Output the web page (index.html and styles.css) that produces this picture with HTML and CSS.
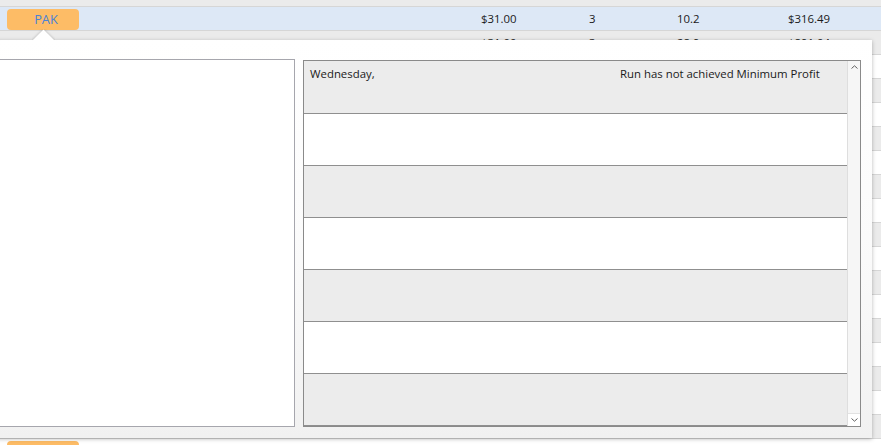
FILE: index.html
```html
<!DOCTYPE html>
<html>
<head>
<meta charset="utf-8">
<link rel="stylesheet" href="styles.css">
</head>
<body>
<div class="grid">
  <div class="row alt"></div>
  <div class="row sel"><div class="c1"><span class="badge">PAK</span></div><div class="c2">$31.00</div><div class="c3">3</div><div class="c4">10.2</div><div class="c5">$316.49</div></div>
  <div class="row alt"><div class="c1"></div><div class="c2">$31.00</div><div class="c3">3</div><div class="c4">28.9</div><div class="c5">$891.04</div></div>
  <div class="row"></div>
  <div class="row alt"></div>
  <div class="row"></div>
  <div class="row alt"></div>
  <div class="row"></div>
  <div class="row alt"></div>
  <div class="row"></div>
  <div class="row alt"></div>
  <div class="row"></div>
  <div class="row alt"></div>
  <div class="row"></div>
  <div class="row alt"></div>
  <div class="row"></div>
  <div class="row alt"></div>
  <div class="row"></div>
  <div class="row alt"></div>
  <div class="row"><div class="c1"><span class="badge"></span></div></div>
</div>

<div class="popup">
  <div class="caret"><div class="caret-sq"></div></div>
  <div class="left-box"></div>
  <div class="right-box">
    <div class="rows">
      <div class="drow head"><span class="day">Wednesday,</span><span class="msg">Run has not achieved Minimum Profit</span></div>
      <div class="drow"></div>
      <div class="drow shade"></div>
      <div class="drow"></div>
      <div class="drow shade"></div>
      <div class="drow"></div>
      <div class="drow shade"></div>
    </div>
    <div class="scrollbar">
      <div class="sb-btn"><svg width="7" height="4" viewBox="0 0 7 4"><path d="M0.5 3.5 L3.5 0.8 L6.5 3.5" fill="none" stroke="#606060" stroke-width="1"/></svg></div>
      <div class="sb-track"></div>
      <div class="sb-btn"><svg width="7" height="4" viewBox="0 0 7 4"><path d="M0.5 0.5 L3.5 3.2 L6.5 0.5" fill="none" stroke="#606060" stroke-width="1"/></svg></div>
    </div>
  </div>
</div>
</body>
</html>
```

FILE: styles.css
```css
html, body {
  margin: 0;
  padding: 0;
}
body {
  width: 881px;
  height: 445px;
  overflow: hidden;
  position: relative;
  background: #ffffff;
  font-family: "Open Sans", "Noto Sans", sans-serif;
  font-size: 11.4px;
  color: #1a1a1a;
}

.grid {
  margin-top: -17px;
}
.row {
  height: 23px;
  border-bottom: 1px solid #d6d6d6;
  background: #ffffff;
  display: grid;
  grid-template-columns: 481px 108px 88px 111px 1fr;
  align-items: center;
  overflow: hidden;
}
.row.alt {
  background: #ebebeb;
}
.row.sel {
  background: #dde8f6;
}
.c1 {
  padding-left: 7px;
  display: flex;
  align-items: center;
  height: 23px;
}
.badge {
  display: flex;
  align-items: center;
  justify-content: center;
  box-sizing: border-box;
  width: 72px;
  height: 21px;
  margin-top: 1px;
  padding-left: 6px;
  border-radius: 4px;
  background: #fdbc66;
  color: #4a82d6;
  font-size: 12.8px;
}

.popup {
  position: absolute;
  left: -9px;
  top: 40px;
  width: 881px;
  height: 398px;
  box-sizing: border-box;
  background: linear-gradient(#ffffff 0%, #fbfbfb 50%, #f1f1f1 100%);
  box-shadow: 0 1px 4px rgba(0, 0, 0, 0.28);
  display: flex;
  align-items: flex-end;
  gap: 8px;
  padding: 19px 11px 11px 0;
}
.caret {
  position: absolute;
  top: -11px;
  left: 41px;
  width: 23px;
  height: 11px;
  overflow: hidden;
}
.caret-sq {
  width: 15px;
  height: 15px;
  background: #ffffff;
  transform: translate(4px, 3.5px) rotate(45deg);
  box-shadow: 0 0 3px rgba(0, 0, 0, 0.25);
}

.left-box {
  width: 304px;
  height: 368px;
  box-sizing: border-box;
  border: 1px solid #a6a6ad;
  background: #ffffff;
}
.right-box {
  width: 558px;
  height: 367px;
  box-sizing: border-box;
  border: 1px solid #8a8a8a;
  display: flex;
  background: #ffffff;
}
.rows {
  flex: 1;
  display: flex;
  flex-direction: column;
}
.drow {
  height: 51px;
  border-bottom: 1px solid #8f8f8f;
  background: #ffffff;
  flex: none;
}
.drow.shade, .drow.head {
  background: #ececec;
}
.drow.head {
  display: grid;
  grid-template-columns: 316px 1fr;
  align-items: start;
  padding-top: 5px;
  height: 47px;
}
.day {
  padding-left: 6px;
}
.scrollbar {
  width: 12px;
  flex: none;
  background: #f6f6f6;
  border-left: 1px solid #dedede;
  display: flex;
  flex-direction: column;
}
.sb-btn {
  height: 12px;
  display: flex;
  align-items: center;
  justify-content: center;
  background: #f6f6f6;
}
.sb-track {
  flex: 1;
}
.sb-btn:last-child {
  border-top: 1px solid #e2e2e2;
  background: #ffffff;
}
```
